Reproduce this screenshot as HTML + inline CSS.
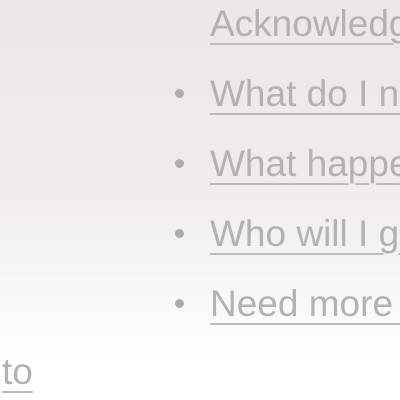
<!DOCTYPE html>
<html><head><style>
html,body{margin:0;padding:0}
body{width:400px;height:400px;overflow:hidden;position:relative;background:linear-gradient(180deg,#ede6e6 0%,#f1ebeb 45%,#faf7f7 75%,#fff 90%);font-family:"Liberation Sans",sans-serif}
.t{position:absolute;left:210px;font-size:37px;line-height:37px;color:#b3b1b1;white-space:nowrap;text-decoration:underline;text-decoration-color:#bcbaba;text-decoration-thickness:2px;text-underline-offset:7px}
.b{position:absolute;left:175px;width:9px;height:9px;border-radius:50%;background:#aeacac}
</style></head><body>
<div class="t" style="top:5px">Acknowledgements</div>
<div class="b" style="top:89px"></div><div class="t" style="top:75px">What do I need</div>
<div class="b" style="top:159px"></div><div class="t" style="top:145px">What happens</div>
<div class="b" style="top:229px"></div><div class="t" style="top:215px">Who will I get</div>
<div class="b" style="top:299px"></div><div class="t" style="top:285px">Need more help</div>
<div class="t" style="top:353px;left:2px">to</div>
</body></html>
